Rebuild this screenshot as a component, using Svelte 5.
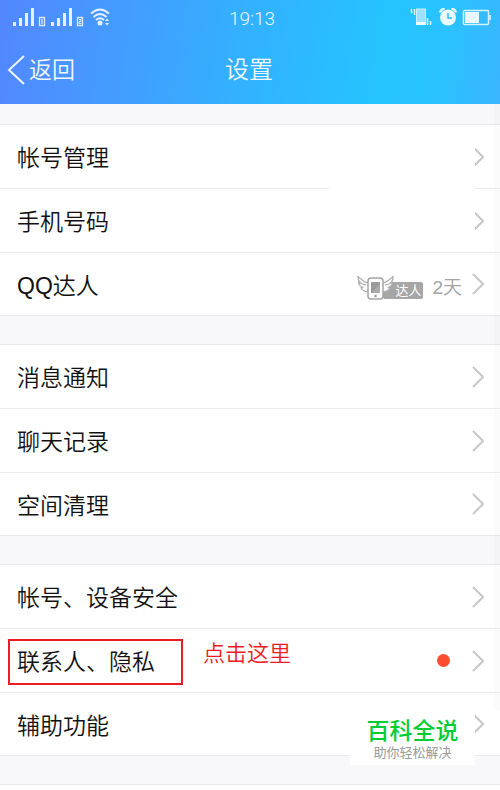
<script lang="ts">
  const groups = [
    [
      { label: "帐号管理" },
      { label: "手机号码", covered: true },
      { label: "QQ达人", days: "2天" },
    ],
    [{ label: "消息通知" }, { label: "聊天记录" }, { label: "空间清理" }],
    [
      { label: "帐号、设备安全" },
      { label: "联系人、隐私", marked: true, dot: true },
      { label: "辅助功能", watermark: true },
    ],
  ];
</script>

<div class="page">
  <header>
    <div class="status-bar">
      <svg class="status-left" width="100" height="20" viewBox="0 0 100 20" fill="#e6f1ff">
        <path d="M0 14h3v4H0zM6 10h3v8H6zM12 5h3v13h-3zM18 0h3v18h-3z" />
        <path d="M38 14h3v4h-3zM44 10h3v8h-3zM50 5h3v13h-3zM56 0h3v18h-3z" />
        <path
          d="M26.500 9.500h5v8h-5zM29 11v5M64.500 9.500h5v8h-5z"
          fill="none"
          stroke="#dceaff"
          stroke-width="1.300"
        />
        <path d="M66 11.500h2v2h-2v2h2.500" fill="none" stroke="#dceaff" />
        <g fill="none" stroke="#e6f1ff" stroke-width="2">
          <path d="M78 5.500q9-8 18 0" />
          <path d="M80.500 9q6.500-6 13 0" />
          <path d="M83 12q4-3.500 8 0" />
        </g>
        <circle cx="87" cy="15" r="2.500" />
        <path d="M92 13l2-2.500 2 2.500zM92 15l2 2.500 2-2.500z" />
      </svg>
      <span class="time">19:13</span>
      <svg class="status-right" width="82" height="20" viewBox="0 0 82 20">
        <path d="M2.500 1v4M5.500 1v6" stroke="#dff5ff" stroke-width="1.500" />
        <path d="M18.500 10v7M21.500 13v4" stroke="#dff5ff" stroke-width="1.500" />
        <rect x="7.500" y="1" width="9" height="15" fill="#9de1ff" stroke="#c9efff" />
        <path d="M7 14h10v3H7z" fill="#effaff" />
        <circle cx="39" cy="9.500" r="8" fill="#eaf8ff" />
        <path
          d="M31 4.500q1-3.500 4.500-4M42.500.500q3.500.500 4.500 4"
          stroke="#dff5ff"
          stroke-width="2.500"
          fill="none"
        />
        <path d="M39 5v5h4" stroke="#29bfff" stroke-width="1.500" fill="none" />
        <rect x="54.500" y="2.500" width="25" height="14" rx="1" fill="none" stroke="#d7f2ff" stroke-width="1.500" />
        <path d="M56 4h14v11H56z" fill="#eaf8ff" />
        <path d="M80 7h2v5h-2z" fill="#bdeaff" />
      </svg>
    </div>
    <nav>
      <a class="back" href="#back">
        <svg width="18" height="30" viewBox="0 0 18 30">
          <path d="M17 1L2 15l15 14" fill="none" stroke="#eef5ff" stroke-width="2" />
        </svg>
        <span>返回</span>
      </a>
      <h1>设置</h1>
    </nav>
  </header>

  <main>
    {#each groups as group}
      <ul>
        {#each group as item}
          <li class:covered={item.covered}>
            <a class="row" href="#{item.label}">
              <span class="label">{item.label}</span>
              {#if item.days}
                <span class="talent">
                  <svg width="38" height="26" viewBox="0 0 38 26">
                    <g fill="#fff" stroke="#b0b0b0" stroke-width="1.300" stroke-linejoin="round">
                      <path d="M11 8Q7 7 4.500 4.500 2.500 3 1 1.500.500 5 3.500 8 2 8 1.500 7.500 2 11 6 12.500q-1 .500-2 .500 2 3.500 7 4" />
                      <path d="M3.500 8q3 2 5.500 2" fill="none" />
                      <path d="M26 8q4-1 6.500-3.500 2-1.500 3.500-3 .500 3.500-2.500 6.500 1.500 0 2-.500-.500 3.500-4.500 5 1 .500 2 .500-2 3.500-7 4" />
                      <path d="M33.500 8q-3 2-5.500 2" fill="none" />
                    </g>
                    <rect x="11" y="3" width="15" height="21" rx="3" fill="#fff" stroke="#a5a5a5" stroke-width="1.500" />
                    <rect x="14" y="7" width="9" height="11" fill="#999" />
                    <path d="M14 18l9-9v9z" fill="#aaa" />
                    <circle cx="18.500" cy="21" r="1.300" fill="#999" />
                  </svg>
                  <span class="badge">达人</span>
                </span>
                <span class="days">{item.days}</span>
              {/if}
              {#if item.dot}
                <span class="dot"></span>
              {/if}
              <svg class="chevron" width="12" height="22" viewBox="0 0 12 22">
                <path d="M1 1l10 10L1 21" fill="none" stroke="#c7c7c9" stroke-width="2" />
              </svg>
            </a>
            {#if item.marked}
              <span class="frame"></span>
              <span class="hint">点击这里</span>
            {/if}
            {#if item.watermark}
              <div class="watermark">
                <strong>百科全说</strong>
                <small>助你轻松解决</small>
              </div>
            {/if}
          </li>
        {/each}
      </ul>
    {/each}
    <div class="next-group"></div>
  </main>
</div>

<style>
  :global(body) {
    background-color: #f8f8fb;
  }

  .page {
    min-height: 100vh;
    display: flex;
    flex-direction: column;
    font-family: "Liberation Sans", "Noto Sans CJK SC", sans-serif;
    font-weight: 350;
    color: #111;
  }

  header {
    height: 104px;
    color: #eef7ff;
    background: linear-gradient(98deg, #5387ff 0%, #459aff 22%, #32b2ff 50%, #25c4ff 76%, #28c3ff 86%, #3ab6ff 100%);
  }

  .status-bar {
    display: grid;
    grid-template-columns: 1fr auto 1fr;
    align-items: center;
    height: 36px;
    padding: 0 9px 0 13px;
  }

  .status-right {
    justify-self: end;
  }

  .time {
    font-family: Roboto, sans-serif;
    font-size: 19px;
    font-weight: 350;
  }

  nav {
    display: grid;
    grid-template-columns: 1fr auto 1fr;
    align-items: center;
    height: 68px;
    padding: 0 9px 0 7px;
  }

  .back {
    display: flex;
    align-items: center;
    gap: 4px;
    color: inherit;
    font-size: 23px;
    line-height: 32px;
    text-decoration: none;
  }

  h1 {
    margin: 0;
    font-size: 24px;
    line-height: 32px;
    font-weight: 350;
  }

  main {
    position: relative;
    flex: 1;
    display: flex;
    flex-direction: column;
    gap: 28px;
    padding-top: 20px;
  }

  main::after {
    content: "";
    position: absolute;
    top: 0;
    right: 0;
    bottom: 80px;
    width: 6px;
    background-color: rgba(0, 0, 0, 0.015);
    pointer-events: none;
  }

  ul {
    margin: 0;
    padding: 0;
    list-style: none;
    background-color: #fff;
    border-top: 1px solid #e9e9eb;
    border-bottom: 1px solid #e9e9eb;
  }

  li {
    position: relative;
  }

  li + li {
    border-top: 1px solid #ececee;
  }

  .row {
    display: flex;
    align-items: center;
    height: 63px;
    padding: 0 16px 0 17px;
    color: inherit;
    text-decoration: none;
  }

  li:last-child .row {
    height: 62px;
  }

  .label {
    flex: 1;
    padding-top: 3px;
    font-size: 23px;
    line-height: 32px;
  }

  /* blank patch over the account details */
  .covered::before {
    content: "";
    position: absolute;
    top: -54px;
    right: 25px;
    width: 146px;
    height: 108px;
    background-color: #fff;
  }

  .talent {
    display: flex;
    align-items: center;
    margin-right: 9px;
    padding-top: 8px;
  }

  .talent svg {
    position: relative;
  }

  .badge {
    margin: 5px 0 0 -12px;
    padding: 0 2px 0 12px;
    border-radius: 2px;
    background-color: #a6a6a6;
    color: #fff;
    font-size: 13px;
    line-height: 17px;
    font-weight: 400;
  }

  .days {
    margin-right: 10px;
    padding-top: 8px;
    color: #a3a3a3;
    font-size: 19px;
    line-height: 28px;
  }

  .dot {
    width: 13px;
    height: 13px;
    margin-right: 22px;
    border-radius: 50%;
    background-color: #fb4e30;
  }

  .frame {
    position: absolute;
    top: 10px;
    left: 8px;
    box-sizing: border-box;
    width: 175px;
    height: 46px;
    border: 2px solid #ed1c24;
    pointer-events: none;
  }

  .hint {
    position: absolute;
    top: 9px;
    left: 203px;
    color: #ed1c24;
    font-size: 22px;
    line-height: 32px;
  }

  .watermark {
    position: absolute;
    top: 18px;
    right: 25px;
    display: flex;
    flex-direction: column;
    align-items: center;
    box-sizing: border-box;
    width: 125px;
    height: 54px;
    padding-top: 6px;
    background-color: #fff;
    z-index: 1;
  }

  .watermark strong {
    color: #00cc33;
    font-size: 23px;
    line-height: 28px;
    font-weight: 500;
  }

  .watermark small {
    color: #999;
    font-size: 13px;
    line-height: 16px;
    font-weight: 400;
  }

  .next-group {
    flex: 1;
    border-top: 1px solid #e9e9eb;
    background-color: #fff;
  }
</style>
